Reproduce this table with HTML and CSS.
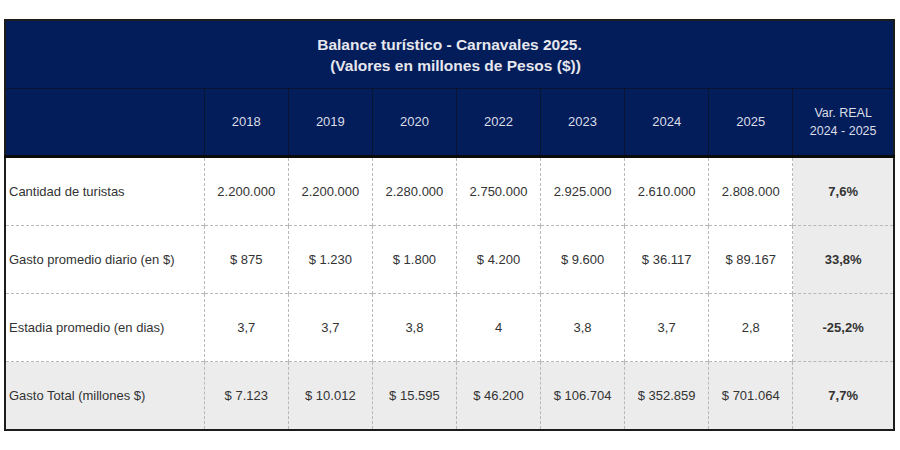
FILE: index.html
```html
<!DOCTYPE html>
<html lang="es">
<head>
<meta charset="utf-8">
<link rel="stylesheet" href="styles.css">
</head>
<body>
<table class="tbl">
  <colgroup>
    <col class="c-label">
    <col class="c-year"><col class="c-year"><col class="c-year"><col class="c-year">
    <col class="c-year"><col class="c-year"><col class="c-year">
    <col class="c-var">
  </colgroup>
  <thead>
    <tr class="title-row">
      <th colspan="9"><span class="t1">Balance turístico - Carnavales 2025.</span><span class="t2">(Valores en millones de Pesos ($))</span></th>
    </tr>
    <tr class="head-row">
      <th></th>
      <th>2018</th><th>2019</th><th>2020</th><th>2022</th><th>2023</th><th>2024</th><th>2025</th>
      <th class="var-h">Var. REAL<br>2024 - 2025</th>
    </tr>
  </thead>
  <tbody>
    <tr>
      <td class="lbl">Cantidad de turistas</td>
      <td>2.200.000</td><td>2.200.000</td><td>2.280.000</td><td>2.750.000</td><td>2.925.000</td><td>2.610.000</td><td>2.808.000</td>
      <td class="var">7,6%</td>
    </tr>
    <tr>
      <td class="lbl">Gasto promedio diario (en $)</td>
      <td>$ 875</td><td>$ 1.230</td><td>$ 1.800</td><td>$ 4.200</td><td>$ 9.600</td><td>$ 36.117</td><td>$ 89.167</td>
      <td class="var">33,8%</td>
    </tr>
    <tr>
      <td class="lbl">Estadia promedio (en dias)</td>
      <td>3,7</td><td>3,7</td><td>3,8</td><td>4</td><td>3,8</td><td>3,7</td><td>2,8</td>
      <td class="var">-25,2%</td>
    </tr>
    <tr class="total">
      <td class="lbl">Gasto Total (millones $)</td>
      <td>$ 7.123</td><td>$ 10.012</td><td>$ 15.595</td><td>$ 46.200</td><td>$ 106.704</td><td>$ 352.859</td><td>$ 701.064</td>
      <td class="var">7,7%</td>
    </tr>
  </tbody>
</table>
</body>
</html>
```

FILE: styles.css
```css
html, body {
  margin: 0;
  background: #ffffff;
}
body {
  padding: 19px 0 0 4px;
  font-family: "Liberation Sans", Arial, sans-serif;
}
.tbl {
  width: 891px;
  border-collapse: collapse;
  table-layout: fixed;
  border: 2px solid #1c1c1c;
}
.c-label { width: 199px; }
.c-year { width: 84px; }
.c-var { width: 101px; }

.title-row th {
  height: 67px;
  background: #021d5a;
  color: #e6e7ee;
  font-weight: bold;
  font-size: 15.5px;
  line-height: 21px;
  text-align: center;
  padding: 0;
  border-bottom: 1px solid #0b1333;
}
.t1, .t2 { display: block; }
.t2 { padding-left: 12px; }

.head-row th {
  height: 66px;
  background: #021d5a;
  color: #dcdee8;
  font-weight: normal;
  font-size: 13px;
  line-height: 18px;
  text-align: center;
  padding: 0;
  border-left: 1px solid #0b1333;
  border-bottom: 3px solid #0a0a0a;
}
.head-row th:first-child { border-left: none; }
.head-row .var-h { font-size: 12.5px; line-height: 18px; }

tbody td {
  height: 67px;
  padding: 0;
  text-align: center;
  font-size: 13px;
  color: #333333;
  border-left: 1px dashed #b8b8b8;
  border-top: 1px dashed #b8b8b8;
  background: #ffffff;
}
tbody tr:first-child td { border-top: none; }
tbody td.lbl {
  text-align: left;
  padding-left: 3px;
  border-left: none;
}
tbody td.var {
  background: #ececec;
  font-weight: bold;
}
tbody tr.total td { background: #ececec; }
```
